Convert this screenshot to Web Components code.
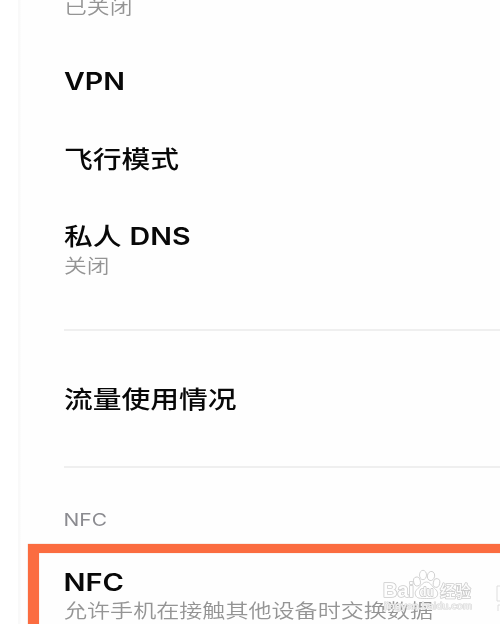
<!DOCTYPE html>
<html lang="zh-CN"><head><meta charset="utf-8"><title>连接设置</title>
<style>html,body{margin:0;width:500px;height:624px;overflow:hidden;background:#fefefe}</style></head>
<body><settings-page></settings-page>
<script>
class WideText extends HTMLElement{
  connectedCallback(){
    const a=(n,d)=>this.getAttribute(n)||d, size=a('size',24), h=+a('h',30), base=a('base',24);
    const runs=a('runs','').split(';').map(r=>{
      const [t,x,w]=r.split('|');
      return `<text x="${x}" y="${base}" textLength="${w}" lengthAdjust="spacingAndGlyphs">${t}</text>`;}).join('');
    this.attachShadow({mode:'open'}).innerHTML=`<style>
      :host{display:block;height:${h}px}
      svg{display:block;overflow:visible;filter:blur(.45px)}
      text{font-family:Inter,"Noto Sans CJK SC",sans-serif;font-size:${size}px;font-weight:${a('weight',500)};fill:${a('color','#080808')}}
      </style><svg width="400" height="${h}">${runs}</svg>`;
  }
}
customElements.define('wide-text',WideText);

class SettingRow extends HTMLElement{
  connectedCallback(){
    this.attachShadow({mode:'open'}).innerHTML=`<style>:host{display:flex;flex:none;flex-direction:column;box-sizing:border-box;height:${this.getAttribute('h')}px;padding-left:64px}</style><slot></slot>`;
  }
}
customElements.define('setting-row',SettingRow);

class RowDivider extends HTMLElement{
  connectedCallback(){
    this.attachShadow({mode:'open'}).innerHTML=`<style>:host{display:block;flex:none;height:2px;margin-left:64px;background:#efefef}</style>`;
  }
}
customElements.define('row-divider',RowDivider);

class HighlightFrame extends HTMLElement{
  connectedCallback(){
    this.attachShadow({mode:'open'}).innerHTML=`<style>
    :host{display:block;flex:none;box-sizing:border-box;height:90px;margin:0 -12px 0 28px;border-top:9px solid #fb6c40;border-left:11px solid #fb6c40;padding:13px 0 0 25px;box-shadow:0 0 1px #d99a7e,inset 0 0 1px #d99a7e;background:#fefefe}</style><slot></slot>`;
  }
}
customElements.define('highlight-frame',HighlightFrame);

class WaterMark extends HTMLElement{
  connectedCallback(){
    this.attachShadow({mode:'open'}).innerHTML=`<style>
    :host{position:absolute;left:370px;top:560px;width:130px;height:64px}
    svg{display:block;filter:blur(.25px)}
    text{font-family:"Liberation Sans","Noto Sans CJK SC",sans-serif;font-weight:700;fill:#fff;fill-opacity:.95;stroke:#cbcbcb;stroke-width:1.6;paint-order:stroke;stroke-linejoin:round}
    .paw{fill:#fff;fill-opacity:.9;stroke:#c9c9c9;stroke-width:.8}
    </style><svg width="130" height="64">
    <text x="13" y="37" font-size="20" textLength="31" lengthAdjust="spacingAndGlyphs">Bai</text>
    <g class="paw"><ellipse cx="47" cy="21.500" rx="3.400" ry="4.500" transform="rotate(-12 47 21.500)"/><ellipse cx="53" cy="15" rx="3.500" ry="4.700"/><ellipse cx="61" cy="16" rx="3.600" ry="4.600" transform="rotate(12 61 16)"/><ellipse cx="66.500" cy="23" rx="3.200" ry="4.400" transform="rotate(12 66.500 23)"/>
    <path d="M56.500 22C53 22 52 25 49 27.500C46 30 44.500 32 45.500 35C46.500 38.500 50 38.500 56.500 38.500C63 38.500 66.500 38.500 67.500 35C68.500 32 66 29.500 63.500 27.500C61 25 60 22 56.500 22Z"/></g>
    <text x="49.500" y="36" font-size="12" textLength="14" lengthAdjust="spacingAndGlyphs" style="fill:#fff;stroke:#c4c4c4;stroke-width:1.300">du</text>
    <text x="70" y="36.500" font-size="15.500" textLength="31" lengthAdjust="spacingAndGlyphs" style="stroke-width:1.500;font-weight:500">经验</text>
    <text x="14" y="49" font-size="8.500" textLength="88" lengthAdjust="spacingAndGlyphs" style="stroke-width:1;stroke:#d6d6d6;font-weight:400;fill-opacity:.75">jingyan.baidu.com</text>
    <path d="M130 26H127V41H130M130 45H128V51" fill="none" stroke="#dedede" stroke-width="1"/>
    </svg>`;
  }
}
customElements.define('water-mark',WaterMark);

class SettingsPage extends HTMLElement{
  connectedCallback(){
    this.attachShadow({mode:'open'}).innerHTML=`<style>
    :host{display:flex;flex-direction:column;position:relative;width:500px;height:624px;overflow:hidden;background:linear-gradient(90deg,#fff 18px,#f9f9f9 18px,#f9f9f9 20px,#fefefe 21px)}
    </style>
    <setting-row h="66"><wide-text runs="已关闭|0|68.500" size="19" weight="350" color="#949494" h="24" base="13.500"></wide-text></setting-row>
    <setting-row h="80"><wide-text runs="VPN|0|61" weight="580" base="23.700"></wide-text></setting-row>
    <setting-row h="78"><wide-text runs="飞行模式|0|115" base="22"></wide-text></setting-row>
    <setting-row h="105"><wide-text runs="私人|0|57.500;DNS|65.500|61" weight="560" base="21"></wide-text><wide-text runs="关闭|0|45.500" size="19" weight="350" color="#949494" h="24" base="18.500"></wide-text></setting-row>
    <row-divider></row-divider>
    <setting-row h="135" style="padding-top:54px"><wide-text runs="流量使用情况|0|172.500" base="23"></wide-text></setting-row>
    <row-divider></row-divider>
    <setting-row h="76" style="padding-top:36px"><wide-text runs="NFC|-.5|43.500" size="17.500" weight="400" color="#8b8b90" h="24" base="22"></wide-text></setting-row>
    <highlight-frame><wide-text runs="NFC|-.5|60.500" weight="580" h="30" base="25"></wide-text><wide-text runs="允许手机在接触其他设备时交换数据|0|369" size="19" weight="350" color="#949494" h="24" base="22"></wide-text></highlight-frame>
    <water-mark></water-mark>`;
  }
}
customElements.define('settings-page',SettingsPage);
</script></body></html>
